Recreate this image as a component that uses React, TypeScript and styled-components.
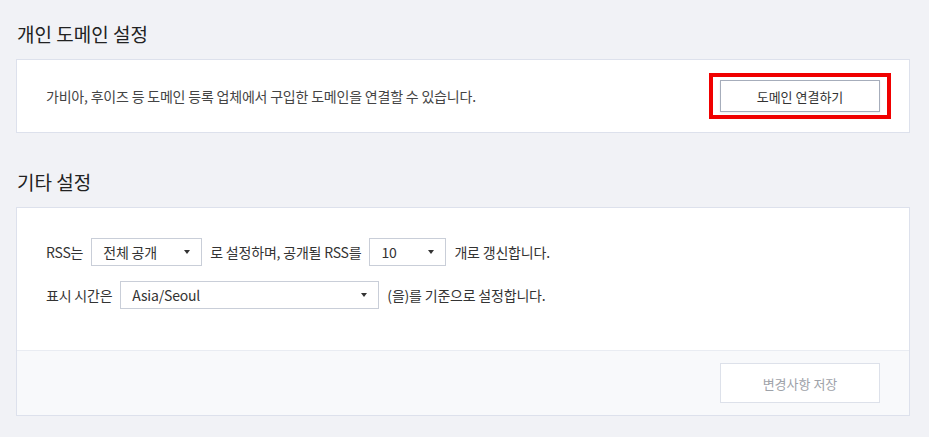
import React from "react";
import styled, { createGlobalStyle } from "styled-components";

const GlobalStyle = createGlobalStyle`
  html, body {
    margin: 0;
    padding: 0;
    background: #f1f2f6;
  }
  body {
    font-family: "Noto Sans CJK KR", "Noto Sans", sans-serif;
    color: #333;
    -webkit-font-smoothing: antialiased;
  }
`;

const Page = styled.div`
  width: 894px;
  padding: 21px 0 20px 16px;
  box-sizing: content-box;
`;

const Section = styled.section<{ $gap?: number }>`
  margin-bottom: ${(p) => p.$gap ?? 0}px;
`;

const Title = styled.h2`
  margin: 0 0 12px 1px;
  font-size: 19px;
  line-height: 26px;
  font-weight: 400;
  color: #222;
`;

const Card = styled.div`
  background: #fff;
  border: 1px solid #dde1ec;
`;

const CardRow = styled.div`
  display: flex;
  align-items: center;
  justify-content: space-between;
  padding: 20px 29px;
`;

const Desc = styled.p`
  margin: 0;
  font-size: 14px;
  line-height: 20px;
  color: #444;
  letter-spacing: -0.2px;
`;

const Highlight = styled.div`
  position: relative;
  display: flex;
  &::after {
    content: "";
    position: absolute;
    left: -11px;
    right: -11px;
    top: -7px;
    bottom: -7px;
    border: 4px solid #f00000;
    pointer-events: none;
  }
`;

const Button = styled.button<{ $disabled?: boolean }>`
  width: 160px;
  height: ${(p) => (p.$disabled ? 40 : 32)}px;
  background: #fff;
  border: 1px solid ${(p) => (p.$disabled ? "#dde1ea" : "#a6adbb")};
  box-shadow: ${(p) => (p.$disabled ? "none" : "0 1px 2px rgba(0,0,0,0.08)")};
  font-family: inherit;
  font-size: 13px;
  color: ${(p) => (p.$disabled ? "#9ea2a9" : "#333")};
  padding: 0;
  cursor: pointer;
`;

const Body = styled.div`
  display: flex;
  flex-direction: column;
  gap: 15px;
  padding: 30px 29px 41px;
`;

const Line = styled.div`
  display: flex;
  align-items: center;
  gap: 8px;
  font-size: 14px;
  color: #333;
  letter-spacing: -0.2px;
  white-space: nowrap;
`;

const Select = styled.div<{ $w: number }>`
  width: ${(p) => p.$w}px;
  height: 28px;
  box-sizing: border-box;
  border: 1px solid #c9ced8;
  background: #fff;
  display: flex;
  align-items: center;
  justify-content: space-between;
  padding: 0 11px 0 11px;
  font-size: 14px;
  color: #333;
`;

const Caret = styled.span`
  width: 0;
  height: 0;
  border-left: 3.5px solid transparent;
  border-right: 3.5px solid transparent;
  border-top: 4px solid #333;
`;

const Footer = styled.div`
  display: flex;
  justify-content: flex-end;
  padding: 12px 29px 12px;
  background: #f8f9fb;
  border-top: 1px solid #e9ecf2;
`;

function Dropdown({ value, width }: { value: string; width: number }) {
  return (
    <Select $w={width}>
      <span>{value}</span>
      <Caret />
    </Select>
  );
}

export default function App() {
  return (
    <>
      <GlobalStyle />
      <Page>
        <Section $gap={36}>
          <Title>개인 도메인 설정</Title>
          <Card>
            <CardRow>
              <Desc>가비아, 후이즈 등 도메인 등록 업체에서 구입한 도메인을 연결할 수 있습니다.</Desc>
              <Highlight>
                <Button>도메인 연결하기</Button>
              </Highlight>
            </CardRow>
          </Card>
        </Section>
        <Section>
          <Title>기타 설정</Title>
          <Card>
            <Body>
              <Line>
                RSS는 <Dropdown value="전체 공개" width={111} /> 로 설정하며, 공개될 RSS를{" "}
                <Dropdown value="10" width={77} /> 개로 갱신합니다.
              </Line>
              <Line>
                표시 시간은 <Dropdown value="Asia/Seoul" width={259} /> (을)를 기준으로 설정합니다.
              </Line>
            </Body>
            <Footer>
              <Button $disabled>변경사항 저장</Button>
            </Footer>
          </Card>
        </Section>
      </Page>
    </>
  );
}
